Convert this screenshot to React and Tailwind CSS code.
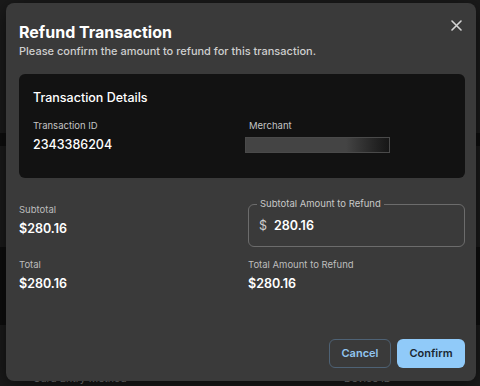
import React from 'react';

const font = { fontFamily: 'Inter, "Noto Sans", sans-serif' };

const Field = ({ label, value }) => (
  <div className="flex flex-col">
    <span className="text-[9.5px] leading-[12px] text-[#bdbdbd]">{label}</span>
    <span className="mt-[5px] text-[12.5px] font-semibold leading-[16px] text-white">{value}</span>
  </div>
);

const App = () => {
  return (
    <div className="relative h-[386px] w-[480px] overflow-hidden bg-[#1b1b1b]" style={font}>
      {/* page behind the dialog */}
      <div className="flex h-full flex-col pt-[133px]">
        <div className="h-[14px] bg-[#0e0e0e]" />
        <div className="h-[105px]" />
        <div className="h-[81px] bg-[#0e0e0e]" />
        <div className="h-[49px]" />
        <div className="flex pl-[33px] text-[10.5px] leading-[14px] text-[#8a8a8a]">
          <span className="w-[311px]">Card Entry Method</span>
          <span>Device ID</span>
        </div>
      </div>

      {/* dialog */}
      <div className="absolute left-[6px] top-[3px] flex h-[378px] w-[470px] flex-col rounded-[8px] bg-[#3a3a3a] pl-[13px] pr-[11px] pt-[19px] shadow-[0_4px_20px_rgba(0,0,0,0.6)]">
        <button className="absolute left-[445px] top-[17px] text-[#d4d4d4]">
          <svg width="11" height="11" viewBox="0 0 11 11" fill="none" stroke="currentColor" strokeWidth="1.6" strokeLinecap="round">
            <path d="M1 1l9 9M10 1L1 10" />
          </svg>
        </button>

        <h2 className="text-[16px] font-bold leading-[20px] text-white">Refund Transaction</h2>
        <p className="mt-[2px] text-[11px] font-medium leading-[14px] text-[#cfcfcf]">
          Please confirm the amount to refund for this transaction.
        </p>

        <div className="mt-[16px] h-[104px] rounded-[6px] bg-[#121212] px-[14px] pt-[16px]">
          <h3 className="text-[12.5px] font-medium leading-[16px] text-white">Transaction Details</h3>
          <div className="mt-[14px] grid grid-cols-2 gap-[14px]">
            <div className="flex flex-col">
              <span className="text-[9.5px] leading-[12px] text-[#c4c4c4]">Transaction ID</span>
              <span className="mt-[5px] text-[12.5px] font-medium leading-[16px] text-white">2343386204</span>
            </div>
            <div className="flex flex-col">
              <span className="text-[9.5px] leading-[12px] text-[#c4c4c4]">Merchant</span>
              <div className="ml-[-4px] mt-[5px] h-[16px] w-[145px] border border-[#4a4a4a] bg-gradient-to-r from-[#444444] from-70% to-[#161616]" />
            </div>
          </div>
        </div>

        <div className="mt-[26px] grid grid-cols-2 gap-x-[12px]">
          <Field label="Subtotal" value="$280.16" />
          <div className="relative h-[43px] rounded-[6px] border border-[#6c6c6c]">
            <span className="absolute left-[8px] top-[-7.5px] bg-[#3a3a3a] px-[3px] text-[9.5px] leading-[12px] text-[#c8c8c8]">
              Subtotal Amount to Refund
            </span>
            <div className="flex h-full items-center pl-[10px] text-[12.5px] leading-[16px]">
              <span className="text-[#cfcfcf]">$</span>
              <span className="ml-[7px] font-semibold text-white">280.16</span>
            </div>
          </div>

          <div className="mt-[12px]">
            <Field label="Total" value="$280.16" />
          </div>
          <div className="mt-[12px]">
            <Field label="Total Amount to Refund" value="$280.16" />
          </div>
        </div>

        <div className="mt-auto mb-[13px] flex justify-end gap-[6px]">
          <button className="h-[29px] w-[62px] rounded-[6px] border border-[#4e6275] text-[11px] font-semibold text-[#92c5f0]">
            Cancel
          </button>
          <button className="h-[29px] w-[68px] rounded-[6px] bg-[#90caf9] text-[11px] font-semibold text-[#1a2733]">
            Confirm
          </button>
        </div>
      </div>
    </div>
  );
};

export default App;
